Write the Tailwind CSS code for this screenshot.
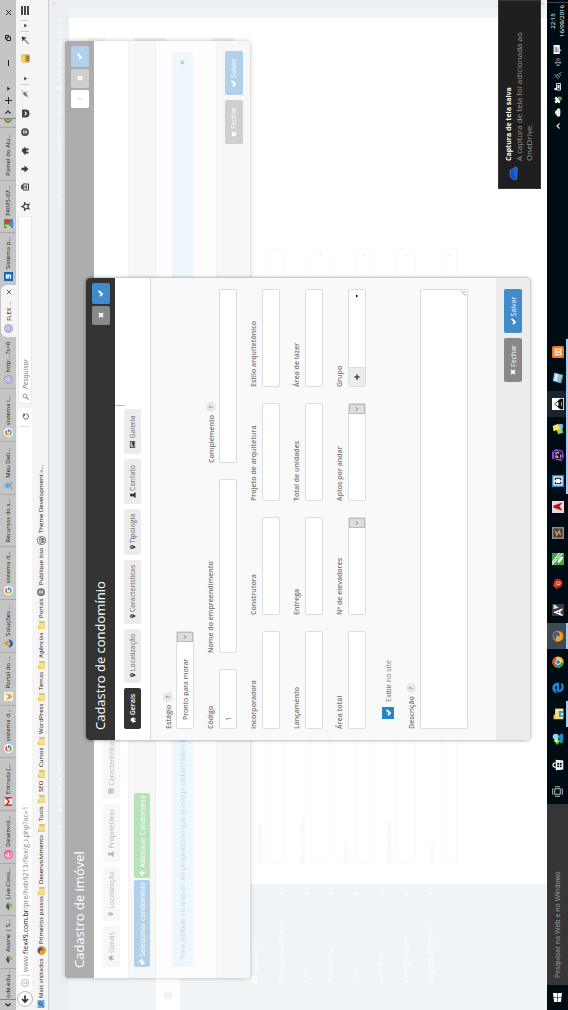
<!DOCTYPE html>
<html lang="pt-BR">
<head>
<meta charset="utf-8">
<title>Cadastro de condomínio</title>
<script src="https://cdn.jsdelivr.net/npm/@tailwindcss/browser@4"></script>
</head>
<body class="relative h-screen overflow-hidden bg-white">
<svg class="hidden" aria-hidden="true">
  <symbol id="check" viewBox="0 0 16 16"><path d="M.5 8.500 3.500 5.500l3.200 3L12.500 2 15.500 5 6.800 14.500z" fill="currentColor"/></symbol>
  <symbol id="times" viewBox="0 0 16 16"><path d="M1 4.500 4.500 1 8 4.500 11.500 1 15 4.500 11.500 8l3.500 3.500-3.500 3.500L8 11.500 4.500 15 1 11.500 4.500 8z" fill="currentColor"/></symbol>
  <symbol id="plus" viewBox="0 0 16 16"><path d="M6 1h4v5h5v4h-5v5H6v-5H1V6h5z" fill="currentColor"/></symbol>
  <symbol id="home" viewBox="0 0 16 16"><path d="M8 1 0 8.500l1.500 1.500L3 8.800V15h3.700v-4.500h2.600V15H13V8.800l1.500 1.200L16 8.500 13 5.500V2h-2v1.700z" fill="currentColor"/></symbol>
  <symbol id="pin" viewBox="0 0 16 16"><path fill-rule="evenodd" d="M8 0a5 5 0 0 0-5 5c0 4 5 11 5 11s5-7 5-11a5 5 0 0 0-5-5zm0 2.800a2.200 2.200 0 1 1 0 4.400 2.200 2.200 0 0 1 0-4.400z" fill="currentColor"/></symbol>
  <symbol id="user" viewBox="0 0 16 16"><path d="M8 0a4 4 0 0 1 3 6.800L10.500 9c3 .5 4.500 2 4.500 6H1c0-4 1.500-5.500 4.500-6L5 6.800A4 4 0 0 1 8 0z" fill="currentColor"/></symbol>
  <symbol id="image" viewBox="0 0 16 16"><path fill-rule="evenodd" d="M0 2h16v12H0zm1.500 1.500v9h13v-9zM3 11.500V10l2.500-2.500L7 9l4-4 2.500 2.500v4zM4.500 4.500a1.300 1.300 0 1 1 0 2.600 1.300 1.300 0 0 1 0-2.600z" fill="currentColor"/></symbol>
  <symbol id="list" viewBox="0 0 16 16"><path d="M1 1h14v3H1zM1 5h14v3H1zM1 9h14v3H1zM1 13h14v2H1z" fill="currentColor"/></symbol>
  <symbol id="link" viewBox="0 0 16 16"><path d="M6.500 9.500 4.500 7.500a2.400 2.400 0 0 0-3 0v3l3.500 3.500h3v-3zM9.500 6.500l2 2a2.400 2.400 0 0 0 3 0v-3L11 2H8v3zM5 5l6 6" fill="currentColor" stroke="currentColor" stroke-width="2"/></symbol>
  <symbol id="chev" viewBox="0 0 16 16"><path d="M3 5l5 5 5-5" fill="none" stroke="currentColor" stroke-width="2.200"/></symbol>
  <symbol id="caret" viewBox="0 0 16 16"><path d="M2 4h12l-6 9z" fill="currentColor"/></symbol>
  <symbol id="folder" viewBox="0 0 16 16"><path d="M0 2h6l1.500 2H16v11H0z" fill="#d8ba58"/><path d="M1 4h13v10.500H1z" fill="#f3e08a"/><path d="M12 5h3v9h-3z" fill="#e3c65c"/></symbol>
  <symbol id="google" viewBox="0 0 16 16"><circle cx="8" cy="8" r="8" fill="#fff"/><g fill="none" stroke-width="2.600"><path d="M11.500 5A4.600 4.600 0 0 0 4 6" stroke="#ea4335"/><path d="M4 6a4.600 4.600 0 0 0 0 4" stroke="#fbbc05"/><path d="M4 10a4.600 4.600 0 0 0 7 1.500" stroke="#34a853"/><path d="M11 11.500A4.600 4.600 0 0 0 12.600 8H8" stroke="#4285f4"/></g></symbol>
  <symbol id="leaf" viewBox="0 0 16 16"><path d="M1 8 8 3l7 4-6 4z" fill="#4f5a4a"/><path d="M7 9l8-1-3 6-5 1z" fill="#8bb84a"/></symbol>
  <symbol id="seal" viewBox="0 0 16 16"><circle cx="8" cy="8" r="7" fill="#dcdcf0" stroke="#8484bc" stroke-width="1.500"/><path d="M4 9V7l2-2 2 2 2-2 2 2v2M4 11h8" fill="none" stroke="#8484c0" stroke-width="1.400"/></symbol>
  <symbol id="globe" viewBox="0 0 16 16"><circle cx="8" cy="8" r="6.500" fill="none" stroke="currentColor" stroke-width="2.500"/><path d="M2 8h12M8 2c-4 4-4 8 0 12M8 2c4 4 4 8 0 12" fill="none" stroke="currentColor" stroke-width="1.500"/></symbol>
  <symbol id="wp" viewBox="0 0 16 16"><circle cx="8" cy="8" r="7.200" fill="#eee" stroke="#666" stroke-width="1.400"/><path d="M3 5l3 8 2-6 2.500 6L13 5M5 5h2M8 5h3" fill="none" stroke="#555" stroke-width="1.700"/></symbol>
  <symbol id="firefox" viewBox="0 0 16 16"><circle cx="8" cy="8" r="7.500" fill="#e66a12"/><circle cx="8.500" cy="6.500" r="4.800" fill="#2a5fa8"/><path d="M1 5c3-1 4 1 7 1 2 1 0 3-1 3 2 3 5 1 7-2-1 7-6 8-9 7S0 10 1 5z" fill="#f6a21c"/></symbol>
  <symbol id="chrome" viewBox="0 0 16 16"><circle cx="8" cy="8" r="7.500" fill="#fbc116"/><path d="M8 8 1.500 4.200A7.500 7.500 0 0 1 14.500 4.500z" fill="#df4330"/><path d="M8 8 1.500 4.200A7.500 7.500 0 0 0 7.500 15.500z" fill="#2fa04b"/><circle cx="8" cy="8" r="3.700" fill="#fff"/><circle cx="8" cy="8" r="2.800" fill="#3f7fe8"/></symbol>
  <symbol id="cloud" viewBox="0 0 16 16"><path d="M4 13a3.500 3.500 0 0 1 0-7 4.500 4.500 0 0 1 8.500 1A3 3 0 0 1 13 13z" fill="currentColor"/></symbol>
</svg>

<!-- Landscape desktop turned a quarter counter-clockwise -->
<div class="absolute top-0 left-0 flex h-[100vw] w-[100vh] origin-top-left translate-y-[100vh] -rotate-90 flex-col overflow-hidden bg-white font-['Open_Sans','Noto_Sans',sans-serif] text-[7px] leading-none text-[#444]">

  <!-- Browser tabs -->
  <div class="flex h-4 shrink-0 items-stretch bg-[#c5c5c5] font-['Noto_Sans',sans-serif] text-[6px] text-[#222]">
    <button class="flex w-[11px] items-center justify-center border-r border-[#888]" aria-label="Abas anteriores"><svg class="size-2 rotate-90"><use href="#chev"/></svg></button>
    <nav class="flex w-[881px] items-stretch whitespace-nowrap">
      <a href="#" class="flex w-[31px] items-center overflow-hidden border-r border-[#a9a9a9] pl-px">ode.edu...</a>
      <a href="#" class="flex flex-1 items-center gap-[3px] border-r border-[#a9a9a9] pl-1"><svg class="size-[9px]"><use href="#leaf"/></svg>Assine | S...</a>
      <a href="#" class="flex flex-1 items-center gap-[3px] border-r border-[#a9a9a9] pl-1"><svg class="size-[9px]"><use href="#leaf"/></svg>Live Class...</a>
      <a href="#" class="flex flex-1 items-center gap-[3px] border-r border-[#a9a9a9] pl-1"><svg class="size-[9px]" viewBox="0 0 16 16"><circle cx="8" cy="8" r="8" fill="#ee5d9b"/><path d="M8 3a5 5 0 1 0 4 8M5 8h6c0-4-5-4-6 0z" fill="none" stroke="#fff" stroke-width="1.600"/></svg>Desenvol...</a>
      <a href="#" class="flex flex-1 items-center gap-[3px] border-r border-[#a9a9a9] pl-1"><svg class="size-[9px]" viewBox="0 0 16 16"><path d="M0 2h16v12H0z" fill="#fff"/><path d="M1.500 14V3.500L8 9l6.500-5.500V14" fill="none" stroke="#d6362b" stroke-width="3"/></svg>Entrada (...</a>
      <a href="#" class="flex flex-1 items-center gap-[3px] border-r border-[#a9a9a9] pl-1"><svg class="size-[9px]"><use href="#google"/></svg>sistema d...</a>
      <a href="#" class="flex flex-1 items-center gap-[3px] border-r border-[#a9a9a9] pl-1"><svg class="size-[9px]" viewBox="0 0 16 16"><path d="M0 0h16v16H0z" fill="#f6f0d8"/><path d="M2 4l6 3 6-3-2 7-4 4-4-4z" fill="#c9a95a"/><circle cx="8" cy="6" r="2" fill="#fff"/></svg>Portal do ...</a>
      <a href="#" class="flex flex-1 items-center gap-[3px] border-r border-[#a9a9a9] pl-1"><svg class="size-[9px]" viewBox="0 0 16 16"><path d="M8 0c5 4 6 7 3 10H5C2 7 5 4 8 0z" fill="#f08a24"/><path d="M1 8l7 3 7-3c0 5-3 8-7 8s-7-3-7-8z" fill="#2d62b5"/><circle cx="8" cy="8" r="2" fill="#fbd63b"/></svg>Soluções ...</a>
      <a href="#" class="flex flex-1 items-center gap-[3px] border-r border-[#a9a9a9] pl-1"><svg class="size-[9px]"><use href="#google"/></svg>sistema d...</a>
      <a href="#" class="flex flex-1 items-center border-r border-[#a9a9a9] pl-1">Recursos do s...</a>
      <a href="#" class="flex flex-1 items-center gap-[3px] border-r border-[#a9a9a9] pl-1"><svg class="size-[9px]" viewBox="0 0 16 16"><path d="M6 1h4v3h3v4h-2v2l-3 3-3-3V8H3V4h3z" fill="#5fa8e0"/><path d="M1 13h5M10 13h5" stroke="#4f9fe0" stroke-width="2"/></svg>Meu Deli...</a>
      <a href="#" class="flex flex-1 items-center gap-[3px] border-r border-[#a9a9a9] pl-1"><svg class="size-[9px]"><use href="#google"/></svg>sistema i...</a>
      <a href="#" class="flex flex-1 items-center gap-[3px] pl-1"><svg class="size-[9px]"><use href="#seal"/></svg>http:...?s=0</a>
      <a href="#" aria-current="page" class="mt-px flex flex-1 items-center gap-[3px] rounded-t-md bg-[#f5f5f5] pl-1"><svg class="size-[9px]"><use href="#seal"/></svg>FLEX ... <svg class="mr-1 ml-auto size-[6px]" viewBox="0 0 8 8"><path d="M1 1l6 6M7 1 1 7" stroke="#333"/></svg></a>
      <a href="#" class="flex flex-1 items-center gap-[3px] border-r border-[#a9a9a9] pl-1"><svg class="size-[9px]" viewBox="0 0 16 16"><path d="M0 0h16v16H0z" fill="#1668b0"/><path d="M12 4.500H5.500v3h5v4H4" fill="none" stroke="#fff" stroke-width="2.500"/></svg>Sistema p...</a>
      <a href="#" class="flex flex-1 items-center gap-[3px] border-r border-[#a9a9a9] pl-1"><svg class="size-[9px]" viewBox="0 0 16 16"><path d="M0 0h16v16H0z" fill="#36a162"/><path d="M0 16 9 7l7 9z" fill="#4a86e8"/><path d="M0 6 6 0v8l-6 6z" fill="#f3cf45"/><path d="M11 1a4 4 0 0 1 4 4c0 3-4 7-4 7S7 8 7 5a4 4 0 0 1 4-4z" fill="#dc3b2e"/></svg>74075-07...</a>
      <a href="#" class="flex flex-1 items-center border-r border-[#a9a9a9] pl-1">Painel do Alu...</a>
      <a href="#" aria-label="Google" class="flex w-[9px] items-center overflow-hidden border-r border-[#888] pl-1"><svg class="size-2 shrink-0"><use href="#chrome"/></svg></a>
    </nav>
    <button class="flex w-[11px] items-center justify-center" aria-label="Próximas abas"><svg class="size-2 -rotate-90"><use href="#chev"/></svg></button>
    <button class="flex w-3 items-center justify-center" aria-label="Nova aba"><svg class="size-[7px]" viewBox="0 0 7 7"><path d="M3 0h1v7H3zM0 3h7v1H0z" fill="#222"/></svg></button>
    <button class="flex w-3 items-center justify-center" aria-label="Listar abas"><svg class="size-[5px]"><use href="#caret"/></svg></button>
    <div class="flex flex-1 items-center justify-around pl-2">
      <button aria-label="Minimizar"><svg class="size-[6px]" viewBox="0 0 6 6"><path d="M0 3h6v1H0z" fill="#222"/></svg></button>
      <button aria-label="Restaurar"><svg class="size-[6px]" viewBox="0 0 12 12"><path d="M1 4h7v7H1zM4 4V1h7v7H8" fill="none" stroke="#222" stroke-width="2"/></svg></button>
      <button aria-label="Fechar janela"><svg class="size-[7px]" viewBox="0 0 7 7"><path d="M1 1l5 5M6 1 1 6" stroke="#222"/></svg></button>
    </div>
  </div>

  <!-- Address bar -->
  <div class="flex h-[18px] shrink-0 items-center bg-[#f5f5f5] text-[#3c3c3c]">
    <button aria-label="Voltar" class="ml-[3px] flex size-4 shrink-0 items-center justify-center rounded-full border border-[#bbb] bg-[#fafafa]"><svg class="size-2" viewBox="0 0 16 16"><path d="M15 8H3M8 2 2 8l6 6" fill="none" stroke="#333" stroke-width="3.500"/></svg></button>
    <div class="flex h-[14px] w-[583px] items-center bg-white">
      <svg class="ml-1 size-2" viewBox="0 0 16 16"><circle cx="8" cy="8" r="7" fill="none" stroke="#888" stroke-width="1.200"/><path d="M8 7v5M8 4v1.500" stroke="#777" stroke-width="1.500"/></svg>
      <span class="mx-[3px] h-[10px] w-px bg-[#ddd]"></span>
      <a href="#" class="text-[#888]">www.<span class="text-[#222]">flex49.com.br</span>/pre/hab9213/flex/g_i.php?ac=1</a>
      <button aria-label="Recarregar" class="ml-auto flex h-[10px] w-[19px] items-center justify-center border-l border-[#ddd]"><svg class="size-[7px]" viewBox="0 0 16 16"><path d="M13 5.500A6 6 0 1 0 14 9" fill="none" stroke="#444" stroke-width="2"/><path d="M14.500 1v6h-6z" fill="#444"/></svg></button>
    </div>
    <label class="ml-1 flex h-[14px] w-[188px] items-center gap-1 border border-[#eaeaea] bg-white pl-[3px]"><svg class="size-[7px]" viewBox="0 0 16 16"><circle cx="9.500" cy="6.500" r="4.500" fill="none" stroke="#777" stroke-width="1.700"/><path d="M6 10l-5 5" stroke="#777" stroke-width="2.500"/></svg><input aria-label="Pesquisar" placeholder="Pesquisar" class="w-24 italic placeholder:text-[#777]"></label>
    <div class="flex flex-1 items-center">
      <div class="flex w-[131px] items-center justify-around">
        <button aria-label="Favoritar"><svg class="size-[9px]" viewBox="0 0 16 16"><path d="M8 1.500l2 4.300 4.700.600-3.500 3.200.900 4.700L8 12l-4.100 2.300.900-4.700L1.300 6.400 6 5.800z" fill="none" stroke="currentColor" stroke-width="2"/></svg></button>
        <button aria-label="Biblioteca"><svg class="size-2" viewBox="0 0 16 16"><path d="M2 4h12v11H2zM5 1h6v3H5zM5 8h6M5 11h6" fill="none" stroke="currentColor" stroke-width="2"/></svg></button>
        <button aria-label="Downloads"><svg class="size-2" viewBox="0 0 16 16"><path d="M5.500 1h5v6H15l-7 8-7-8h4.500z" fill="currentColor"/></svg></button>
        <button aria-label="Página inicial"><svg class="size-2"><use href="#home"/></svg></button>
        <button aria-label="Web"><svg class="size-2"><use href="#globe"/></svg></button>
        <button aria-label="Pocket"><svg class="size-[9px]" viewBox="0 0 16 16"><path d="M1 2h14v6a7 7 0 0 1-14 0z" fill="currentColor"/><path d="M4.500 6.500 8 10l3.500-3.500" fill="none" stroke="#fff" stroke-width="2"/></svg></button>
        <button aria-label="Firebug"><svg class="size-2" viewBox="0 0 16 16"><ellipse cx="8" cy="8" rx="3" ry="5" transform="rotate(45 8 8)" fill="#777"/><path d="M1 15l3-3M3 6l4 4M7 3l3 3M10 9l4 4M12 4l3-3M2 10l4 4" fill="none" stroke="#999" stroke-width="1.700"/></svg></button>
      </div>
      <button aria-label="Mais" class="flex h-2 w-3 items-center justify-center border-l border-[#ccc]"><svg class="size-[5px]"><use href="#caret"/></svg></button>
      <button aria-label="Régua" class="ml-1 flex w-5 justify-center"><svg class="size-[9px]" viewBox="0 0 16 16"><path d="M1 1h14v14H1z" fill="#caa338"/><path d="M2 2h12v5H2z" fill="#f5d565"/><path d="M4 10h2v5H4zM7 10h2v5H7zM10 10h2v5h-2z" fill="#8a6b1a"/></svg></button>
      <button aria-label="Conta-gotas" class="flex w-[17px] justify-center"><svg class="size-[9px]" viewBox="0 0 16 16"><path d="M1 15l2-5 6-5 2 2-6 6z" fill="#999"/><path d="M7 3l6 6 1.500-1.500L13 6l2.500-3-2.500-2.500L10 3 8.500 1.500z" fill="#333"/></svg></button>
      <button aria-label="Opções do conta-gotas" class="flex h-2 w-3 items-center justify-center border-x border-[#ccc]"><svg class="size-[5px]"><use href="#caret"/></svg></button>
      <button aria-label="Menu" class="mr-[6px] ml-auto"><svg class="size-[9px]" viewBox="0 0 9 9"><path d="M0 0h9v2H0zM0 3h9v2H0zM0 6h9v2H0z" fill="#444"/></svg></button>
    </div>
  </div>

  <!-- Bookmarks -->
  <nav class="flex h-[15px] shrink-0 items-center border-b border-[#c9cdd1] bg-[#f5f5f5] pl-[2px] font-['Noto_Sans',sans-serif] text-[6px] whitespace-nowrap text-[#222]">
    <a href="#" class="flex w-[53px] items-center gap-[2px]"><svg class="size-2" viewBox="0 0 16 16"><path d="M0 1h16v14H0z" fill="#6fb0dc"/><circle cx="9" cy="7" r="3" fill="none" stroke="#1d4f7c" stroke-width="2"/><path d="M7 9l-4 4" stroke="#1d4f7c" stroke-width="2"/></svg>Mais visitados</a>
    <a href="#" class="flex w-[60px] items-center gap-[2px]"><svg class="size-[9px]"><use href="#firefox"/></svg>Primeiros passos</a>
    <a href="#" class="flex w-[63px] items-center gap-[3px]"><svg class="size-2"><use href="#folder"/></svg>Desenvolvimento</a>
    <a href="#" class="flex w-[29px] items-center gap-[3px]"><svg class="size-2"><use href="#folder"/></svg>Tools</a>
    <a href="#" class="flex w-[25px] items-center gap-[3px]"><svg class="size-2"><use href="#folder"/></svg>SEO</a>
    <a href="#" class="flex w-[33px] items-center gap-[3px]"><svg class="size-2"><use href="#folder"/></svg>Cursos</a>
    <a href="#" class="flex w-11 items-center gap-[3px]"><svg class="size-2"><use href="#folder"/></svg>WordPress</a>
    <a href="#" class="flex w-8 items-center gap-[3px]"><svg class="size-2"><use href="#folder"/></svg>Temas</a>
    <a href="#" class="flex w-10 items-center gap-[3px]"><svg class="size-2"><use href="#folder"/></svg>Agências</a>
    <a href="#" class="flex w-[33px] items-center gap-[3px]"><svg class="size-2"><use href="#folder"/></svg>Portais</a>
    <a href="#" class="flex w-[51px] items-center gap-[3px]"><svg class="size-2 text-[#666]"><use href="#globe"/></svg>Publique isso</a>
    <a href="#" class="flex items-center gap-[3px]"><svg class="size-[9px]"><use href="#wp"/></svg>Theme Development «...</a>
  </nav>

  <!-- Page behind the dialogs -->
  <div class="flex min-h-0 flex-1 bg-[#f0f4f7]">
    <div class="flex min-w-0 flex-1 flex-col">
      <header class="flex h-5 shrink-0 items-center bg-[#ebeff3] pr-[11px] pl-[132px] text-[#fafbfc]">
        <span class="flex w-[66px] items-center gap-1">♧ Notificações ▾</span>
        <span class="flex w-[31px] items-center gap-1">● Chat ▾</span>
        <span class="flex items-center gap-1">● Site</span>
        <span class="ml-auto">◷ Período de Avaliação: 15 dias ▾</span>
        <span class="ml-2 flex items-center gap-[3px]"><svg class="size-[6px]"><use href="#user"/></svg>Ana Carolina Vale ▾</span>
      </header>
      <div class="flex min-h-0 flex-1">
        <aside class="flex w-[126px] shrink-0 flex-col bg-[#f0f4f7] text-[#fdfefe]">
          <div class="mt-[87px] flex h-6 items-center bg-white pl-[11px] text-[#e9eff4]"><svg class="size-2"><use href="#globe"/></svg></div>
          <nav class="mt-[62px] flex flex-col">
            <a href="#" class="flex h-6 items-center gap-1 pl-[27px]"><svg class="size-[7px]"><use href="#image"/></svg>Contatos</a>
            <a href="#" class="flex h-[25px] items-center justify-between border-t border-[#edf1f4] pt-1 pr-2 pl-7">Portais imobiliários <span>◂</span></a>
            <a href="#" class="flex h-[25px] items-center justify-between border-t border-[#edf1f4] pt-1 pr-2 pl-7">CRM <span>◂</span></a>
            <a href="#" class="flex h-[25px] items-center justify-between pt-1 pr-2 pl-7">Relatórios <span>◂</span></a>
            <a href="#" class="flex h-[25px] items-center justify-between pt-1 pr-2 pl-7">Site <span>◂</span></a>
            <a href="#" class="flex h-[25px] items-center justify-between pt-1 pr-2 pl-7">Auxiliares <span>◂</span></a>
            <a href="#" class="flex h-[25px] items-center justify-between pt-1 pr-2 pl-7">Configurações <span>◂</span></a>
            <a href="#" class="flex h-[25px] items-center justify-between pt-1 pr-2 pl-7">Suporte CODE 49 <span>◂</span></a>
          </nav>
        </aside>
        <main class="flex flex-1 flex-col bg-white px-5 pt-[18px] font-semibold text-[#f4f4f4]">
          <div class="flex h-[167px] flex-col items-end">
            <span class="h-[18px] w-3 bg-[#f0faf0]"></span>
            <span class="mt-[29px] h-8 w-3 bg-[#e6f1f9]"></span>
            <span class="mt-[45px] h-6 w-[14px] rounded-sm bg-[#eceff2]"></span>
          </div>
          <div class="flex w-[616px] flex-col gap-[11px]">
            <div class="flex flex-col gap-[2px]"><span class="h-3 leading-3">Dormitórios</span><span class="h-[18px] rounded-sm border border-[#fafafa]"></span></div>
            <div class="flex flex-col gap-[2px]"><span class="h-3 leading-3">Valor máximo</span><span class="flex h-[18px] items-center justify-end rounded-sm border border-[#fafafa] pr-1 text-[#ddd]"><svg class="size-[3px]"><use href="#caret"/></svg></span></div>
            <div class="flex flex-col gap-[2px]"><span class="h-3 leading-3">Grupo</span><span class="flex h-[18px] items-center justify-end rounded-sm border border-[#fafafa] pr-1 text-[#ddd]"><svg class="size-[3px]"><use href="#caret"/></svg></span></div>
            <div class="flex flex-col gap-[2px]"><span class="h-3 leading-3">Responsável</span><span class="flex h-[18px] items-center justify-end rounded-sm border border-[#fafafa] pr-1 text-[#ddd]"><svg class="size-[3px]"><use href="#caret"/></svg></span></div>
            <div class="flex flex-col gap-[2px]"><span class="h-3 leading-3">Fotos</span><span class="flex h-[18px] items-center justify-end rounded-sm border border-[#fafafa] pr-1 text-[#ddd]"><svg class="size-[3px]"><use href="#caret"/></svg></span></div>
          </div>
        </main>
        <div class="w-[10px] bg-[#f0f4f7]"></div>
      </div>
    </div>
    <div class="flex w-2 flex-col items-center justify-between bg-[#efefef] py-[2px] text-[#aaa]"><svg class="size-[5px] rotate-180"><use href="#chev"/></svg><svg class="size-[5px]"><use href="#chev"/></svg></div>
  </div>

  <!-- Taskbar -->
  <footer class="flex h-[21px] shrink-0 items-stretch bg-[#000c14] text-white">
    <button aria-label="Iniciar" class="flex w-[25px] items-center justify-center"><svg class="size-[9px]" viewBox="0 0 16 16"><path d="M0 2l7-1v6.500H0zM8 1l8-1v7.500H8zM0 8.500h7V15l-7-1zM8 8.500h8V16l-8-1z" fill="#fff"/></svg></button>
    <input aria-label="Pesquisar na Web e no Windows" placeholder="Pesquisar na Web e no Windows" class="w-[181px] bg-[#363636] px-[7px] font-['Noto_Sans',sans-serif] text-[7px] placeholder:text-[#999]">
    <div class="flex w-[465px] items-stretch">
      <button aria-label="Visão de tarefas" class="flex flex-1 items-center justify-center"><svg class="size-[11px]" viewBox="0 0 16 16"><path d="M4 4h8v8H4zM2 5H1v6h1M14 5h1v6h-1M4 2V1h8v1M4 14v1h8v-1" fill="none" stroke="#ccc" stroke-width="1.300"/></svg></button>
      <button aria-label="Loja" class="flex flex-1 items-center justify-center"><svg class="size-3" viewBox="0 0 16 16"><path d="M1 5h14l-1 10H2z" fill="#fff"/><path d="M5 5c0-5 6-5 6 0" fill="none" stroke="#fff" stroke-width="1.500"/><path d="M5 7h2.500v2.500H5zM8.500 7H11v2.500H8.500zM5 10.500h2.500V13H5zM8.500 10.500H11V13H8.500z" fill="#000c14"/></svg></button>
      <button aria-label="Messenger" class="flex flex-1 items-center justify-center"><svg class="size-3" viewBox="0 0 16 16"><path d="M0 7l6-5 3 4-4 5z" fill="#52c234"/><circle cx="11" cy="5" r="4" fill="#8ad8fa"/><path d="M2 14c0-6 6-6 8 0z" fill="#36a83a"/><path d="M5 15c0-8 11-8 10 0z" fill="#1e86d8"/><circle cx="6" cy="6" r="2.500" fill="#c8f0b0"/></svg></button>
      <button aria-label="Explorador" class="flex flex-1 items-center justify-center border-b-2 border-[#a5d0f0] pt-[2px]"><svg class="size-3" viewBox="0 0 16 16"><path d="M1 2h5l2 2h7v11H1z" fill="#f0c14a"/><path d="M2 5h13v10H2z" fill="#fbe28a"/><path d="M4 9h8v6H9.500v-3h-3v3H4z" fill="#3ba0e6"/></svg></button>
      <button aria-label="Edge" class="flex flex-1 items-center justify-center"><svg class="size-3" viewBox="0 0 16 16"><path d="M1 8C1 3 4 .5 8 .5c5 0 7 3.500 7 7.500v1.500H5.500C6 13 10 13.500 14 11.500v3C9 17 3 15.500 2.500 10 3 7 5 5 6 4.500 3.500 4.500 2 6 1 8zm4.800-1.300h5C10.800 3.500 6.500 3.500 5.800 6.700z" fill="#1a82e0"/></svg></button>
      <button aria-label="Chrome" class="flex flex-1 items-center justify-center"><svg class="size-3"><use href="#chrome"/></svg></button>
      <button aria-label="Firefox" class="flex flex-1 items-center justify-center border-b-2 border-[#a5d0f0] bg-[#3c4a55] pt-[2px]"><svg class="size-3"><use href="#firefox"/></svg></button>
      <button aria-label="Fontes" class="flex flex-1 items-center justify-center"><svg class="size-3" viewBox="0 0 16 16"><path d="M0 0h16v16H0z" fill="#3a3a3a"/><path d="M1 14 5 4l4 10M2.500 10.500h5" fill="none" stroke="#fff" stroke-width="1.800"/><path d="M9 2h6v2l-4 5z" fill="#ddd"/></svg></button>
      <button aria-label="Player" class="flex flex-1 items-center justify-center"><svg class="size-3" viewBox="0 0 16 16"><circle cx="9" cy="8" r="6" fill="#c91f1f"/><path d="M0 8l6-7 3 4z" fill="#e23a2a"/><circle cx="9" cy="8.500" r="3" fill="#f5c84a"/><circle cx="9.500" cy="8.500" r="1.700" fill="#2f6ba8"/></svg></button>
      <button aria-label="Corel" class="flex flex-1 items-center justify-center"><svg class="size-3" viewBox="0 0 16 16"><path d="M0 0h16v16H0z" fill="#3fa648"/><path d="M0 0 16 14M3 0l13 10" stroke="#fff" stroke-width="1.500"/><ellipse cx="7" cy="11" rx="5" ry="2" fill="#fff" transform="rotate(35 7 11)"/></svg></button>
      <button aria-label="Sublime" class="flex flex-1 items-center justify-center"><svg class="size-3" viewBox="0 0 16 16"><path d="M0 0h16v16H0z" fill="#8d8d8d"/><path d="M2 2h12v12H2z" fill="#3f3f3f"/><path d="M11 4.500 5 6.500l6 3-6 2" fill="none" stroke="#e5953c" stroke-width="1.800"/></svg></button>
      <button aria-label="Adobe Reader" class="flex flex-1 items-center justify-center"><svg class="size-3" viewBox="0 0 16 16"><path d="M0 0h16v16H0z" fill="#e6dada"/><path d="M3 14 7 2h3l4 12-5-4z" fill="#b8151b"/></svg></button>
      <button aria-label="Brackets" class="flex flex-1 items-center justify-center border-b-2 border-[#a5d0f0] pt-[2px]"><svg class="size-3" viewBox="0 0 16 16"><path d="M0 0h16v16H0z" fill="#2e8fd8"/><path d="M2 2h12v12H2z" fill="#fff"/><path d="M7 4.500H4.500v7H7M9 4.500h2.500v7H9" fill="none" stroke="#333" stroke-width="1.800"/></svg></button>
      <button aria-label="PhpStorm" class="flex flex-1 items-center justify-center border-b-2 border-[#a5d0f0] pt-[2px]"><svg class="size-3" viewBox="0 0 16 16"><path d="M3 0h9l4 5-2 9-8 2-6-4z" fill="#9b3fe0"/><path d="M3 3h10v10H3z" fill="#111"/><path d="M5 9V5h2v2H5M11.500 5H9.500v1.500h2V9h-2M4.500 11.500h4" fill="none" stroke="#fff"/></svg></button>
      <button aria-label="Notas" class="flex flex-1 items-center justify-center border-b-2 border-[#a5d0f0] pt-[2px]"><svg class="size-3" viewBox="0 0 16 16"><path d="M1 8l6-2 3 7-7 2z" fill="#8fd06a"/><path d="M9 8l6 1-1 6-6-1z" fill="#7cc4ee"/><path d="M5 2l7-1 3 7-7 3z" fill="#fbe25e"/></svg></button>
      <button aria-label="Inkscape" class="flex flex-1 items-center justify-center border-b-2 border-[#a5d0f0] bg-[#18252e] pt-[2px]"><svg class="size-3" viewBox="0 0 16 16"><path d="M0 0h16v16H0z" fill="#fff"/><path d="M1 15v-4l7-8 7 8v4z" fill="#111"/><path d="M8 4l3 4-2 1-1-1-1 1-2-1zM4 13l4-1 4 1z" fill="#fff"/></svg></button>
      <button aria-label="Bloco de notas" class="flex flex-1 items-center justify-center border-b-2 border-[#a5d0f0] pt-[2px]"><svg class="size-3" viewBox="0 0 16 16"><path d="M4 1l11 2-3 12L1 12z" fill="#8fc4d8"/><path d="M5 3l9 2-1 3-9-2z" fill="#e0f2f8"/><path d="M2 11l10 3-1 1-9-2z" fill="#4a7f95"/></svg></button>
      <button aria-label="XAMPP" class="flex flex-1 items-center justify-center border-b-2 border-[#a5d0f0] pt-[2px]"><svg class="size-3" viewBox="0 0 16 16"><rect width="16" height="16" rx="2" fill="#f37623"/><path d="M4 4h2.500l1.500 3 1.500-3H12v3l-1.500 1L12 9v3H9.500L8 9l-1.500 3H4V9l1.500-1L4 7z" fill="none" stroke="#fff" stroke-width="1.500"/></svg></button>
    </div>
    <div class="ml-auto flex w-[89px] items-center text-[#eee]">
      <span class="flex flex-1 justify-center"><svg class="size-2 rotate-180"><use href="#chev"/></svg></span>
      <span class="flex flex-1 justify-center"><svg class="size-[9px]"><use href="#cloud"/></svg></span>
      <span class="flex flex-1 justify-center"><svg class="size-2" viewBox="0 0 16 16"><path d="M1 4l4-3 3 3 3-3 4 3-3 3 3 3-4 3-3-3-3 3-4-3 3-3z" fill="#fff"/><circle cx="11" cy="12" r="4" fill="#36b33c"/></svg></span>
      <span class="flex flex-1 justify-center"><svg class="size-2" viewBox="0 0 16 16"><path d="M2 5h13v8H2z" fill="none" stroke="#fff" stroke-width="1.700"/><path d="M5 7h7v4H5zM2 1h4v5H2z" fill="#fff"/></svg></span>
      <span class="flex flex-1 justify-center"><svg class="size-2" viewBox="0 0 16 16"><path d="M1 9a12 12 0 0 1 8-7M4 12a9 9 0 0 1 6-6M8 14a5 5 0 0 1 4-4M12 14h2" fill="none" stroke="#ccc" stroke-width="1.600"/></svg></span>
      <span class="flex flex-1 justify-center"><svg class="size-2" viewBox="0 0 16 16"><path d="M1 6h2l4-4v12l-4-4H1zM9.500 5c2 2 2 4 0 6M12 3c3.500 3 3.500 7 0 10" fill="none" stroke="#ccc" stroke-width="1.400"/></svg></span>
      <span class="flex flex-1 justify-center"><svg class="size-[9px]" viewBox="0 0 16 16"><path d="M0 1h16v11H9l-3 3v-3H0z" fill="#fff"/><path d="M3 4h10M3 6.500h10M3 9h7" stroke="#222"/></svg></span>
    </div>
    <time datetime="2016-09-16T22:15" class="ml-1 flex w-9 flex-col items-center justify-center gap-[3px] font-['Noto_Sans',sans-serif] text-[6px]"><span>22:15</span><span>16/09/2016</span></time>
    <span class="mr-[2px] border-r border-[#444]"></span>
  </footer>

  <!-- Dialog underneath: property -->
  <section aria-label="Cadastro de imóvel" class="absolute top-[65px] right-[41px] left-8 flex h-[185px] flex-col overflow-hidden rounded-sm bg-white shadow-[0_0_4px_rgba(0,0,0,0.25)]">
    <header class="flex h-[29px] shrink-0 items-center gap-[2px] bg-[#333] pr-[5px] pl-[10px] text-white">
      <h2 class="mr-auto text-[13px]">Cadastro de imóvel</h2>
      <button aria-label="Ajuda" class="h-[18px] w-[18px] rounded-xs bg-white text-[8px] text-[#777]">?</button>
      <button aria-label="Fechar" class="flex h-[18px] w-[19px] items-center justify-center rounded-xs bg-[#888]"><svg class="size-[6px]"><use href="#times"/></svg></button>
      <button aria-label="Salvar" class="flex h-[18px] w-[21px] items-center justify-center rounded-xs bg-[#428bca]"><svg class="size-[7px]"><use href="#check"/></svg></button>
    </header>
    <nav class="flex h-[35px] shrink-0 items-center gap-[5px] border-b border-[#ddd] pl-[11px] text-[#444]">
      <a href="#" class="flex h-[17px] w-[41px] items-center justify-center gap-[2px] rounded-xs bg-[#ececec]"><svg class="size-[6px]"><use href="#home"/></svg>Gerais</a>
      <a href="#" class="flex h-[17px] w-[54px] items-center justify-center gap-[2px] rounded-xs bg-[#ececec]"><svg class="size-[6px]"><use href="#pin"/></svg>Localização</a>
      <a href="#" class="flex h-[17px] w-[58px] items-center justify-center gap-[2px] rounded-xs bg-[#ececec]"><svg class="size-[6px]"><use href="#user"/></svg>Proprietário</a>
      <a href="#" class="flex h-[17px] w-[66px] items-center justify-center gap-[2px] rounded-xs bg-[#ececec]"><svg class="size-[6px]"><use href="#list"/></svg>Características</a>
    </nav>
    <div class="flex h-[27px] shrink-0 items-center gap-[2px] border-b border-[#ddd] bg-[#ececec] pl-[11px] text-white">
      <button class="flex h-4 w-[87px] items-center justify-center gap-[2px] rounded-xs bg-[#428bca] whitespace-nowrap"><svg class="size-[6px]"><use href="#link"/></svg>Selecionar condomínio</button>
      <button class="flex h-4 w-[85px] items-center justify-center gap-[2px] rounded-xs bg-[#4cb84c] whitespace-nowrap"><svg class="size-[6px]"><use href="#plus"/></svg>Adicionar Condomínio</button>
    </div>
    <div class="flex-1 bg-[#f9f9f9] px-[11px] pt-4">
      <div class="flex h-[21px] items-center justify-between rounded-sm bg-[#d4eef8] px-2 text-[#4f9fc0]"><p>Para atribuir ao imóvel um proprietário que já esteja cadastrado no sistema</p><button aria-label="Dispensar" class="text-[#777]"><svg class="size-[5px]"><use href="#times"/></svg></button></div>
    </div>
    <footer class="flex h-[34px] shrink-0 items-center justify-end gap-[5px] border-t border-[#ddd] bg-[#ececec] pr-[10px] text-white">
      <button class="flex h-[18px] w-11 items-center justify-center gap-[2px] rounded-xs bg-[#888]"><svg class="size-[6px]"><use href="#times"/></svg>Fechar</button>
      <button class="flex h-[18px] w-11 items-center justify-center gap-[2px] rounded-xs bg-[#428bca]"><svg class="size-[7px]"><use href="#check"/></svg>Salvar</button>
    </footer>
    <div class="absolute inset-0 bg-white/60"></div>
  </section>

  <!-- Active dialog: condominium -->
  <section role="dialog" aria-labelledby="dlg" class="absolute top-[86px] right-[278px] left-[270px] flex flex-col overflow-hidden rounded-sm bg-white shadow-[0_0_3px_1px_rgba(0,0,0,0.28)]">
    <header class="flex h-[29px] items-center gap-[2px] bg-[#333] pr-[5px] pl-[10px] text-white">
      <h1 id="dlg" class="mr-auto text-[13px]">Cadastro de condomínio</h1>
      <button aria-label="Fechar" class="flex h-[18px] w-[19px] items-center justify-center rounded-xs bg-[#888]"><svg class="size-[6px]"><use href="#times"/></svg></button>
      <button aria-label="Salvar" class="flex h-[18px] w-[21px] items-center justify-center rounded-xs bg-[#428bca]"><svg class="size-[7px]"><use href="#check"/></svg></button>
    </header>
    <nav class="flex h-9 items-center gap-[5px] border-b border-[#d8d8d8] pr-[11px] pl-[11px] text-[#666]">
      <a href="#" class="flex h-[17px] w-[41px] items-center justify-center gap-[2px] rounded-xs bg-[#333] font-semibold text-white"><svg class="size-[6px]"><use href="#home"/></svg>Gerais</a>
      <a href="#" class="flex h-[17px] w-[54px] items-center justify-center gap-px rounded-xs bg-[#ececec]"><svg class="size-[6px] text-[#333]"><use href="#pin"/></svg>Localização</a>
      <a href="#" class="flex h-[17px] w-16 items-center justify-center gap-px rounded-xs bg-[#ececec]"><svg class="size-[6px] text-[#333]"><use href="#pin"/></svg>Características</a>
      <a href="#" class="flex h-[17px] w-[46px] items-center justify-center gap-px rounded-xs bg-[#ececec]"><svg class="size-[6px] text-[#333]"><use href="#pin"/></svg>Tipologia</a>
      <a href="#" class="flex h-[17px] w-[45px] items-center justify-center gap-px rounded-xs bg-[#ececec]"><svg class="size-[6px] text-[#333]"><use href="#user"/></svg>Contato</a>
      <a href="#" class="flex h-[17px] w-[45px] items-center justify-center gap-[2px] rounded-xs bg-[#ececec]"><svg class="size-[7px] text-[#333]"><use href="#image"/></svg>Galeria</a>
      <span class="-ml-[2px] h-[10px] w-px self-start bg-[#bbb]"></span>
    </nav>
    <form class="flex flex-col gap-[11px] bg-[#f9f9f9] px-[11px] pt-[11px] pb-7 text-[#777]">
      <div class="grid grid-cols-4 gap-x-4">
        <div class="flex flex-col gap-[2px]">
          <label for="estagio" class="flex h-3 items-center gap-[3px] font-semibold">Estágio <span class="flex size-[10px] items-center justify-center rounded-full bg-[#e8e8e8] text-[6px]">?</span></label>
          <div class="flex h-[18px] rounded-xs border border-[#ddd] bg-white"><select id="estagio" class="min-w-0 flex-1 appearance-none px-2 font-['Noto_Sans',sans-serif] text-[7px] text-[#555]"><option>Pronto para morar</option></select><span class="flex w-[10px] items-center justify-center border border-[#bbb] bg-[#ddd]"><svg class="size-[6px]"><use href="#chev"/></svg></span></div>
        </div>
      </div>
      <div class="flex gap-4">
        <div class="flex w-[60px] flex-col gap-[2px]"><label for="codigo" class="h-3 leading-3 font-semibold">Código</label><input id="codigo" value="1" class="h-[18px] w-full rounded-xs border border-[#ddd] bg-white px-[7px] text-[#555]"></div>
        <div class="flex flex-1 flex-col gap-[2px]"><label for="nome" class="h-3 leading-3 font-semibold">Nome do empreendimento</label><input id="nome" class="h-[18px] w-full rounded-xs border border-[#ddd] bg-white px-2"></div>
        <div class="flex flex-1 flex-col gap-[2px]"><label for="comp" class="flex h-3 items-center gap-[3px] font-semibold">Complemento <span class="flex size-[10px] items-center justify-center rounded-full bg-[#e8e8e8] text-[6px]">?</span></label><input id="comp" class="h-[18px] w-full rounded-xs border border-[#ddd] bg-white px-2"></div>
      </div>
      <div class="grid grid-cols-4 gap-x-4 gap-y-[11px]">
        <div class="flex flex-col gap-[2px]"><label for="f1" class="h-3 leading-3 font-semibold">Incorporadora</label><input id="f1" class="h-[18px] w-full rounded-xs border border-[#ddd] bg-white px-2"></div>
        <div class="flex flex-col gap-[2px]"><label for="f2" class="h-3 leading-3 font-semibold">Construtora</label><input id="f2" class="h-[18px] w-full rounded-xs border border-[#ddd] bg-white px-2"></div>
        <div class="flex flex-col gap-[2px]"><label for="f3" class="h-3 leading-3 font-semibold">Projeto de arquitetura</label><input id="f3" class="h-[18px] w-full rounded-xs border border-[#ddd] bg-white px-2"></div>
        <div class="flex flex-col gap-[2px]"><label for="f4" class="h-3 leading-3 font-semibold">Estilo arquitetônico</label><input id="f4" class="h-[18px] w-full rounded-xs border border-[#ddd] bg-white px-2"></div>
        <div class="flex flex-col gap-[2px]"><label for="f5" class="h-3 leading-3 font-semibold">Lançamento</label><input id="f5" class="h-[18px] w-full rounded-xs border border-[#ddd] bg-white px-2"></div>
        <div class="flex flex-col gap-[2px]"><label for="f6" class="h-3 leading-3 font-semibold">Entrega</label><input id="f6" class="h-[18px] w-full rounded-xs border border-[#ddd] bg-white px-2"></div>
        <div class="flex flex-col gap-[2px]"><label for="f7" class="h-3 leading-3 font-semibold">Total de unidades</label><input id="f7" class="h-[18px] w-full rounded-xs border border-[#ddd] bg-white px-2"></div>
        <div class="flex flex-col gap-[2px]"><label for="f8" class="h-3 leading-3 font-semibold">Área de lazer</label><input id="f8" class="h-[18px] w-full rounded-xs border border-[#ddd] bg-white px-2"></div>
        <div class="flex flex-col gap-[2px]"><label for="f9" class="h-3 leading-3 font-semibold">Área total</label><input id="f9" class="h-[18px] w-full rounded-xs border border-[#ddd] bg-white px-2"></div>
        <div class="flex flex-col gap-[2px]"><label for="f10" class="h-3 leading-3 font-semibold">Nº de elevadores</label><div class="flex h-[18px] rounded-xs border border-[#ddd] bg-white"><select id="f10" class="min-w-0 flex-1 appearance-none px-2"><option></option></select><span class="flex w-[10px] items-center justify-center border border-[#bbb] bg-[#ddd]"><svg class="size-[6px]"><use href="#chev"/></svg></span></div></div>
        <div class="flex flex-col gap-[2px]"><label for="f11" class="h-3 leading-3 font-semibold">Aptos por andar</label><div class="flex h-[18px] rounded-xs border border-[#ddd] bg-white"><select id="f11" class="min-w-0 flex-1 appearance-none px-2"><option></option></select><span class="flex w-[10px] items-center justify-center border border-[#bbb] bg-[#ddd]"><svg class="size-[6px]"><use href="#chev"/></svg></span></div></div>
        <div class="flex flex-col gap-[2px]"><label for="f12" class="h-3 leading-3 font-semibold">Grupo</label><div class="flex h-[18px] items-stretch rounded-xs border border-[#ddd] bg-white"><button type="button" aria-label="Adicionar grupo" class="flex w-[19px] items-center justify-center border-r border-[#ddd] bg-[#ececec] text-[#444]"><svg class="size-[6px]"><use href="#plus"/></svg></button><select id="f12" class="min-w-0 flex-1 appearance-none px-2"><option></option></select><svg class="mr-1 size-1 self-center text-black"><use href="#caret"/></svg></div></div>
      </div>
      <label class="mt-[5px] ml-[10px] flex h-3 items-center gap-[5px]"><span class="grid size-3 place-items-center"><input type="checkbox" checked class="col-start-1 row-start-1 size-3 appearance-none bg-[#2488c8]"><svg class="col-start-1 row-start-1 size-[7px] text-white"><use href="#check"/></svg></span>Exibir no site</label>
      <div class="flex flex-col gap-[3px]">
        <label for="desc" class="flex h-3 items-center gap-[3px] font-semibold">Descrição <span class="flex size-[10px] items-center justify-center rounded-full bg-[#e8e8e8] text-[6px]">?</span></label>
        <div class="relative h-12"><textarea id="desc" class="block h-full w-full resize-none rounded-xs border border-[#ddd] bg-white"></textarea><svg class="absolute right-[2px] bottom-[2px] size-[5px]" viewBox="0 0 10 10"><path d="M0 10 10 0M5 10l5-5" stroke="#999" stroke-width="1.500"/></svg></div>
      </div>
    </form>
    <footer class="flex h-[34px] items-center justify-end gap-[5px] bg-[#ececec] pr-[11px] text-white">
      <button class="flex h-[18px] w-11 items-center justify-center gap-[2px] rounded-xs bg-[#888]"><svg class="size-[6px]"><use href="#times"/></svg>Fechar</button>
      <button class="flex h-[18px] w-11 items-center justify-center gap-[2px] rounded-xs bg-[#428bca]"><svg class="size-[7px]"><use href="#check"/></svg>Salvar</button>
    </footer>
  </section>

  <!-- OneDrive notification -->
  <aside role="status" class="absolute right-0 bottom-[27px] flex h-[43px] w-[189px] items-start gap-[5px] border border-[#3a3a3a] bg-[#1f1f1f] pt-[5px] pl-[7px]">
    <svg class="mt-1 h-[11px] w-[15px] shrink-0" viewBox="0 0 24 16"><path d="M3 13a4 4 0 0 1 1-6 5 5 0 0 1 7-4 6 6 0 0 1 9 5 4 4 0 0 1 1 6z" fill="#0f4fc0" stroke="#6a93e0"/><path d="M7 14c-1-4 3-6 5-4 2-4 7-2 7 1l2 3z" fill="#1c65dc"/></svg>
    <div class="text-[8px] leading-[10px] text-[#999]"><p class="text-[7px] leading-[10px] font-bold text-white">Captura de tela salva</p><p>A captura de tela foi adicionada ao<br>OneDrive.</p></div>
  </aside>
</div>
</body>
</html>
